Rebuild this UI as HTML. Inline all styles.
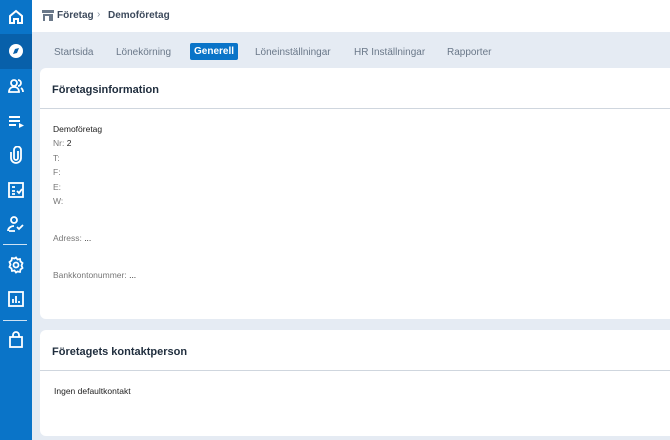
<!DOCTYPE html>
<html><head><meta charset="utf-8"><style>
*{margin:0;padding:0;box-sizing:border-box}
body{width:670px;height:440px;overflow:hidden;background:#e5ebf3;font-family:"Liberation Sans",sans-serif;position:relative}
.sb{position:absolute;left:0;top:0;width:32px;height:440px;background:#0a74c8}
.sb .act{position:absolute;left:0;top:34px;width:32px;height:35px;background:#0860aa}
.ic{position:absolute;left:7px;width:18px;height:18px}
.sep{position:absolute;left:3px;width:24px;height:1px;background:#cfe2f3}
.hdr{position:absolute;left:32px;top:0;right:0;height:32px;background:#fff;font-size:10px;font-weight:bold;color:#3d4a5c}
.tabs{position:absolute;top:44px;left:0;font-size:10px;color:#6a7889}
.tabs span{position:absolute;top:0;white-space:nowrap;line-height:17px}
.gen{background:#0a74c8;color:#fff;font-weight:bold;border-radius:2px;padding:0 4px;top:-1px!important}
.card{position:absolute;left:40px;right:0;background:#fff;border-radius:6px 0 0 6px}
.card h2{font-size:11px;font-weight:bold;color:#1f2d3d;padding:16px 0 0 12px;height:41px;border-bottom:1px solid #cfd6de}
.t{position:absolute;font-size:8.5px;color:#777;left:13px}
.t b{font-weight:normal;color:#222}
</style></head><body>
<div class="sb">
<div class="act"></div>
<svg class="ic" style="top:8px" viewBox="0 0 18 18" fill="none" stroke="#fff" stroke-width="2"><path d="M3 8l6-5 6 5v7H11v-4H7v4H3z"/></svg>
<svg class="ic" style="top:42px" viewBox="0 0 18 18"><circle cx="9" cy="9" r="7" fill="#fff"/><path d="M6 12l2-5 4-1-2 5z" fill="#0860aa"/></svg>
<svg class="ic" style="top:77px" viewBox="0 0 18 18" fill="none" stroke="#fff" stroke-width="1.8"><circle cx="7" cy="6" r="3"/><path d="M2 15c0-3 2-5 5-5s5 2 5 5z"/><path d="M11 3a3 3 0 010 6M14 11c1.5 1 2 2.5 2 4"/></svg>
<svg class="ic" style="top:112px" viewBox="0 0 18 18" fill="#fff"><rect x="2" y="4" width="11" height="2"/><rect x="2" y="8" width="11" height="2"/><rect x="2" y="12" width="7" height="2"/><path d="M12 11l5 2.5-5 2.5z"/></svg>
<svg class="ic" style="top:146px" viewBox="0 0 18 18" fill="none" stroke="#fff" stroke-width="1.8"><path d="M11 5v7a2 2 0 01-4 0V4a3.5 3.5 0 017 0v8a5 5 0 01-10 0V6"/></svg>
<svg class="ic" style="top:181px" viewBox="0 0 18 18" fill="none" stroke="#fff" stroke-width="1.8"><rect x="2" y="2" width="14" height="14"/><path d="M5 6h3M5 10h3M5 13h3M10 10l2 2 3-4"/></svg>
<svg class="ic" style="top:215px" viewBox="0 0 18 18" fill="none" stroke="#fff" stroke-width="1.8"><circle cx="7" cy="5" r="3"/><path d="M1 16c0-3 3-5 6-5M2 16h6M10 12l2 2 4-4"/></svg>
<div class="sep" style="top:244px"></div>
<svg class="ic" style="top:256px" viewBox="0 0 18 18" fill="none" stroke="#fff" stroke-width="1.8"><circle cx="9" cy="9" r="2.5"/><path d="M9 1.5l1.5 2 2.5-.5.5 2.5 2 1.5-1 2.5 1 2.5-2 1.5-.5 2.5-2.5-.5L9 16.5l-1.5-2-2.5.5-.5-2.5-2-1.5 1-2.5-1-2.5 2-1.5.5-2.5 2.5.5z"/></svg>
<svg class="ic" style="top:290px" viewBox="0 0 18 18" fill="none" stroke="#fff" stroke-width="1.8"><rect x="2" y="2" width="14" height="14"/><path d="M6 13V9M9 13V6M12 13v-2"/></svg>
<div class="sep" style="top:320px"></div>
<svg class="ic" style="top:331px" viewBox="0 0 18 18" fill="none" stroke="#fff" stroke-width="1.8"><rect x="3" y="6" width="12" height="10"/><path d="M6 6V4a3 3 0 016 0v2"/></svg>
</div>
<div class="hdr">
<svg style="position:absolute;left:10px;top:10px" width="12" height="11" viewBox="0 0 12 11"><rect x="0" y="0" width="12" height="3" fill="#6a7889"/><rect x="1" y="4" width="10" height="7" fill="#6a7889"/><rect x="3" y="6" width="4" height="5" fill="#fff"/></svg>
<span style="position:absolute;left:25px;top:10px">Företag</span>
<span style="position:absolute;left:65px;top:9px;color:#8894a2;font-weight:normal">›</span>
<span style="position:absolute;left:76px;top:10px">Demoföretag</span>
</div>
<div class="tabs">
<span style="left:54px">Startsida</span>
<span style="left:116px">Lönekörning</span>
<span class="gen" style="left:190px">Generell</span>
<span style="left:255px">Löneinställningar</span>
<span style="left:354px">HR Inställningar</span>
<span style="left:447px">Rapporter</span>
</div>
<div class="card" style="top:68px;height:251px">
<h2>Företagsinformation</h2>
<div class="t" style="top:56px"><b>Demoföretag</b></div>
<div class="t" style="top:70px">Nr: <b>2</b></div>
<div class="t" style="top:85px">T:</div>
<div class="t" style="top:99px">F:</div>
<div class="t" style="top:114px">E:</div>
<div class="t" style="top:128px">W:</div>
<div class="t" style="top:165px">Adress: <b>...</b></div>
<div class="t" style="top:202px">Bankkontonummer: <b>...</b></div>
</div>
<div class="card" style="top:330px;height:106px">
<h2>Företagets kontaktperson</h2>
<div class="t" style="top:56px;left:14px"><b>Ingen defaultkontakt</b></div>
</div>
</body></html>
